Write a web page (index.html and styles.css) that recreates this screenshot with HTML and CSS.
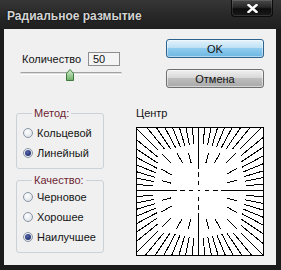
FILE: index.html
```html
<!DOCTYPE html>
<html lang="ru">
<head>
  <meta charset="UTF-8" />
  <title>Радиальное размытие</title>
  <link rel="stylesheet" href="styles.css">
</head>
<body>
<div class="window">
  <div class="titlebar">
    <span class="title">Радиальное размытие</span>
    <span class="close">
      <svg width="11" height="9" viewBox="0 0 11 9">
        <path d="M1.5 1 L9.5 8 M9.5 1 L1.5 8" stroke="#fff" stroke-width="2.4" stroke-linecap="square"/>
      </svg>
    </span>
  </div>
  <div class="client">
    <div class="left">
      <div class="amount">
        <span>Количество</span>
        <span class="field">50</span>
      </div>
      <div class="slider">
        <svg class="thumb" width="8" height="12" viewBox="0 0 8 12">
          <defs>
            <linearGradient id="tg" x1="0" y1="0" x2="0" y2="1">
              <stop offset="0" stop-color="#d6f0cf"/>
              <stop offset="1" stop-color="#6dae68"/>
            </linearGradient>
          </defs>
          <polygon points="0.5,4.5 4,0.5 7.5,4.5 7.5,11.5 0.5,11.5" fill="url(#tg)" stroke="#3f7a3d"/>
        </svg>
      </div>
      <fieldset class="group method">
        <legend>Метод:</legend>
        <div class="radio"><span class="dot"></span>Кольцевой</div>
        <div class="radio checked"><span class="dot"></span>Линейный</div>
      </fieldset>
      <fieldset class="group quality">
        <legend>Качество:</legend>
        <div class="radio"><span class="dot"></span>Черновое</div>
        <div class="radio"><span class="dot"></span>Хорошее</div>
        <div class="radio checked"><span class="dot"></span>Наилучшее</div>
      </fieldset>
    </div>
    <div class="right">
      <span class="btn ok">OK</span>
      <span class="btn cancel">Отмена</span>
      <span class="center-label">Центр</span>
      <div class="preview">
        <svg id="preview" width="126" height="127" viewBox="0 0 126 127" shape-rendering="crispEdges"></svg>
      </div>
    </div>
  </div>
</div>
<script src="script.js"></script>
</body>
</html>
```

FILE: styles.css
```css
body {
    margin: 0;
    background: #151515;
    font-family: "Liberation Sans", Arial, sans-serif;
    font-size: 11px;
    color: #141414;
}
.window {
    width: 281px;
    height: 270px;
    display: flex;
    flex-direction: column;
    background: #1b1b1b;
}
.titlebar {
    height: 29px;
    display: flex;
    align-items: flex-start;
    background: linear-gradient(#363636, #262626 60%, #1f1f1f);
}
.title {
    padding: 4px 0 0 7px;
    line-height: 25px;
    font-size: 12px;
    font-weight: bold;
    color: #d4d4d4;
    text-shadow: 0 0 2px #000;
}
.close {
    margin-left: auto;
    margin-right: 8px;
    width: 42px;
    height: 17px;
    box-sizing: border-box;
    display: flex;
    align-items: center;
    justify-content: center;
    border: 1px solid #0a0a0a;
    border-top: none;
    border-radius: 0 0 4px 4px;
    background: linear-gradient(#4a4a4a, #262626 45%, #0c0c0c 55%, #1a1a1a);
    box-shadow: inset 0 0 0 1px rgba(255, 255, 255, 0.12);
}
.client {
    margin-left: 4px;
    width: 272px;
    height: 236px;
    display: flex;
    justify-content: space-between;
    background: #f0f0f0;
}
.left {
    padding-left: 12px;
    display: flex;
    flex-direction: column;
    align-items: flex-start;
}
.amount {
    margin: 23px 0 0 6px;
    width: 98px;
    height: 14px;
    display: flex;
    align-items: center;
    justify-content: space-between;
}
.field {
    width: 32px;
    height: 14px;
    box-sizing: border-box;
    padding-left: 4px;
    line-height: 12px;
    border: 1px solid #8e8e8e;
    background: #f4f4f4;
}
.slider {
    position: relative;
    margin: 6px 0 0 4px;
    width: 102px;
    height: 1px;
    border-top: 1px solid #a2a2a2;
    border-bottom: 1px solid #fff;
    border-radius: 2px;
    background: #dcdcdc;
}
.thumb {
    position: absolute;
    left: 46px;
    top: -4px;
}
.group {
    margin: 0;
    width: 88px;
    box-sizing: border-box;
    border: 1px solid #cbd2d7;
    border-radius: 3px;
    padding: 0 0 5px 6px;
}
.group legend {
    margin-left: 9px;
    padding: 0 2px;
    line-height: 13px;
    color: #6e1f33;
}
.method {
    margin-top: 32px;
    padding-top: 3px;
}
.quality {
    margin-top: 5px;
}
.radio {
    height: 20px;
    display: flex;
    align-items: center;
    gap: 4px;
}
.dot {
    width: 10px;
    height: 10px;
    box-sizing: border-box;
    border-radius: 50%;
    border: 1px solid #8b96a3;
    background: radial-gradient(circle at 40% 35%, #ffffff, #d4dbe3);
    display: flex;
    align-items: center;
    justify-content: center;
}
.checked .dot::after {
    content: "";
    width: 6px;
    height: 6px;
    border-radius: 50%;
    background: radial-gradient(circle at 40% 35%, #5567b0, #111c52);
}
.right {
    width: 128px;
    margin-right: 12px;
    display: flex;
    flex-direction: column;
    align-items: flex-end;
}
.btn {
    width: 98px;
    height: 19px;
    box-sizing: border-box;
    border-radius: 3px;
    display: flex;
    align-items: center;
    justify-content: center;
    color: #111;
}
.ok {
    margin-top: 10px;
    border: 1px solid #2d628d;
    background: linear-gradient(#e3f3fc, #bfe1f4 45%, #8fcbee 50%, #6db7e2);
    box-shadow: inset 0 0 0 1px rgba(255, 255, 255, 0.45);
}
.cancel {
    margin-top: 11px;
    border: 1px solid #6f6f6f;
    background: linear-gradient(#f0f0f0, #d8d8d8 45%, #bdbdbd 50%, #a9a9a9);
    box-shadow: inset 0 0 0 1px rgba(255, 255, 255, 0.5);
}
.center-label {
    align-self: flex-start;
    margin-top: 19px;
    line-height: 13px;
}
.preview {
    margin-top: 7px;
    width: 128px;
    height: 129px;
    box-sizing: border-box;
    border: 1px solid #000;
    background: #fff;
}
.preview svg {
    display: block;
}
```

FILE: script.js
```js
const svg = document.getElementById('preview');
const NS = 'http://www.w3.org/2000/svg';
const W = 126, H = 127, cx = 61.5, cy = 62.5;

function seg(x1, y1, x2, y2) {
  let l = document.createElementNS(NS, 'line');
  l.setAttribute('x1', x1);
  l.setAttribute('y1', y1);
  l.setAttribute('x2', x2);
  l.setAttribute('y2', y2);
  l.setAttribute('stroke', '#000');
  svg.appendChild(l);
}

function ray(a, r1, r2) {
  let dx = Math.cos(a), dy = Math.sin(a);
  let L = Math.min((dx > 0 ? W - cx : cx) / Math.abs(dx), (dy > 0 ? H - cy : cy) / Math.abs(dy));
  seg(cx + dx * r1 * L, cy + dy * r1 * L, cx + dx * r2 * L, cy + dy * r2 * L);
}

// axes: solid outside, dashed near the centre
seg(cx, 0, cx, cy - 22);
seg(cx, cy + 22, cx, H);
seg(0, cy, cx - 22, cy);
seg(cx + 22, cy, W, cy);
[[14, 19], [6, 10]].forEach(([a, b]) => {
  seg(cx, cy - b, cx, cy - a);
  seg(cx, cy + a, cx, cy + b);
  seg(cx - b, cy, cx - a, cy);
  seg(cx + a, cy, cx + b, cy);
});
seg(cx - 1, cy, cx + 1, cy);

// outer rays, a bit longer towards the corners
for (let k = 0; k < 64; k++) {
  if (k % 16 === 0) continue;
  let a = k * Math.PI / 32;
  ray(a, 0.76 - 0.1 * Math.abs(Math.sin(2 * a)), 1.05);
}
// inner rays, every 15deg
for (let k = 0; k < 24; k++) {
  if (k % 6 === 0) continue;
  ray(k * Math.PI / 12, 0.44, 0.6);
}
```
